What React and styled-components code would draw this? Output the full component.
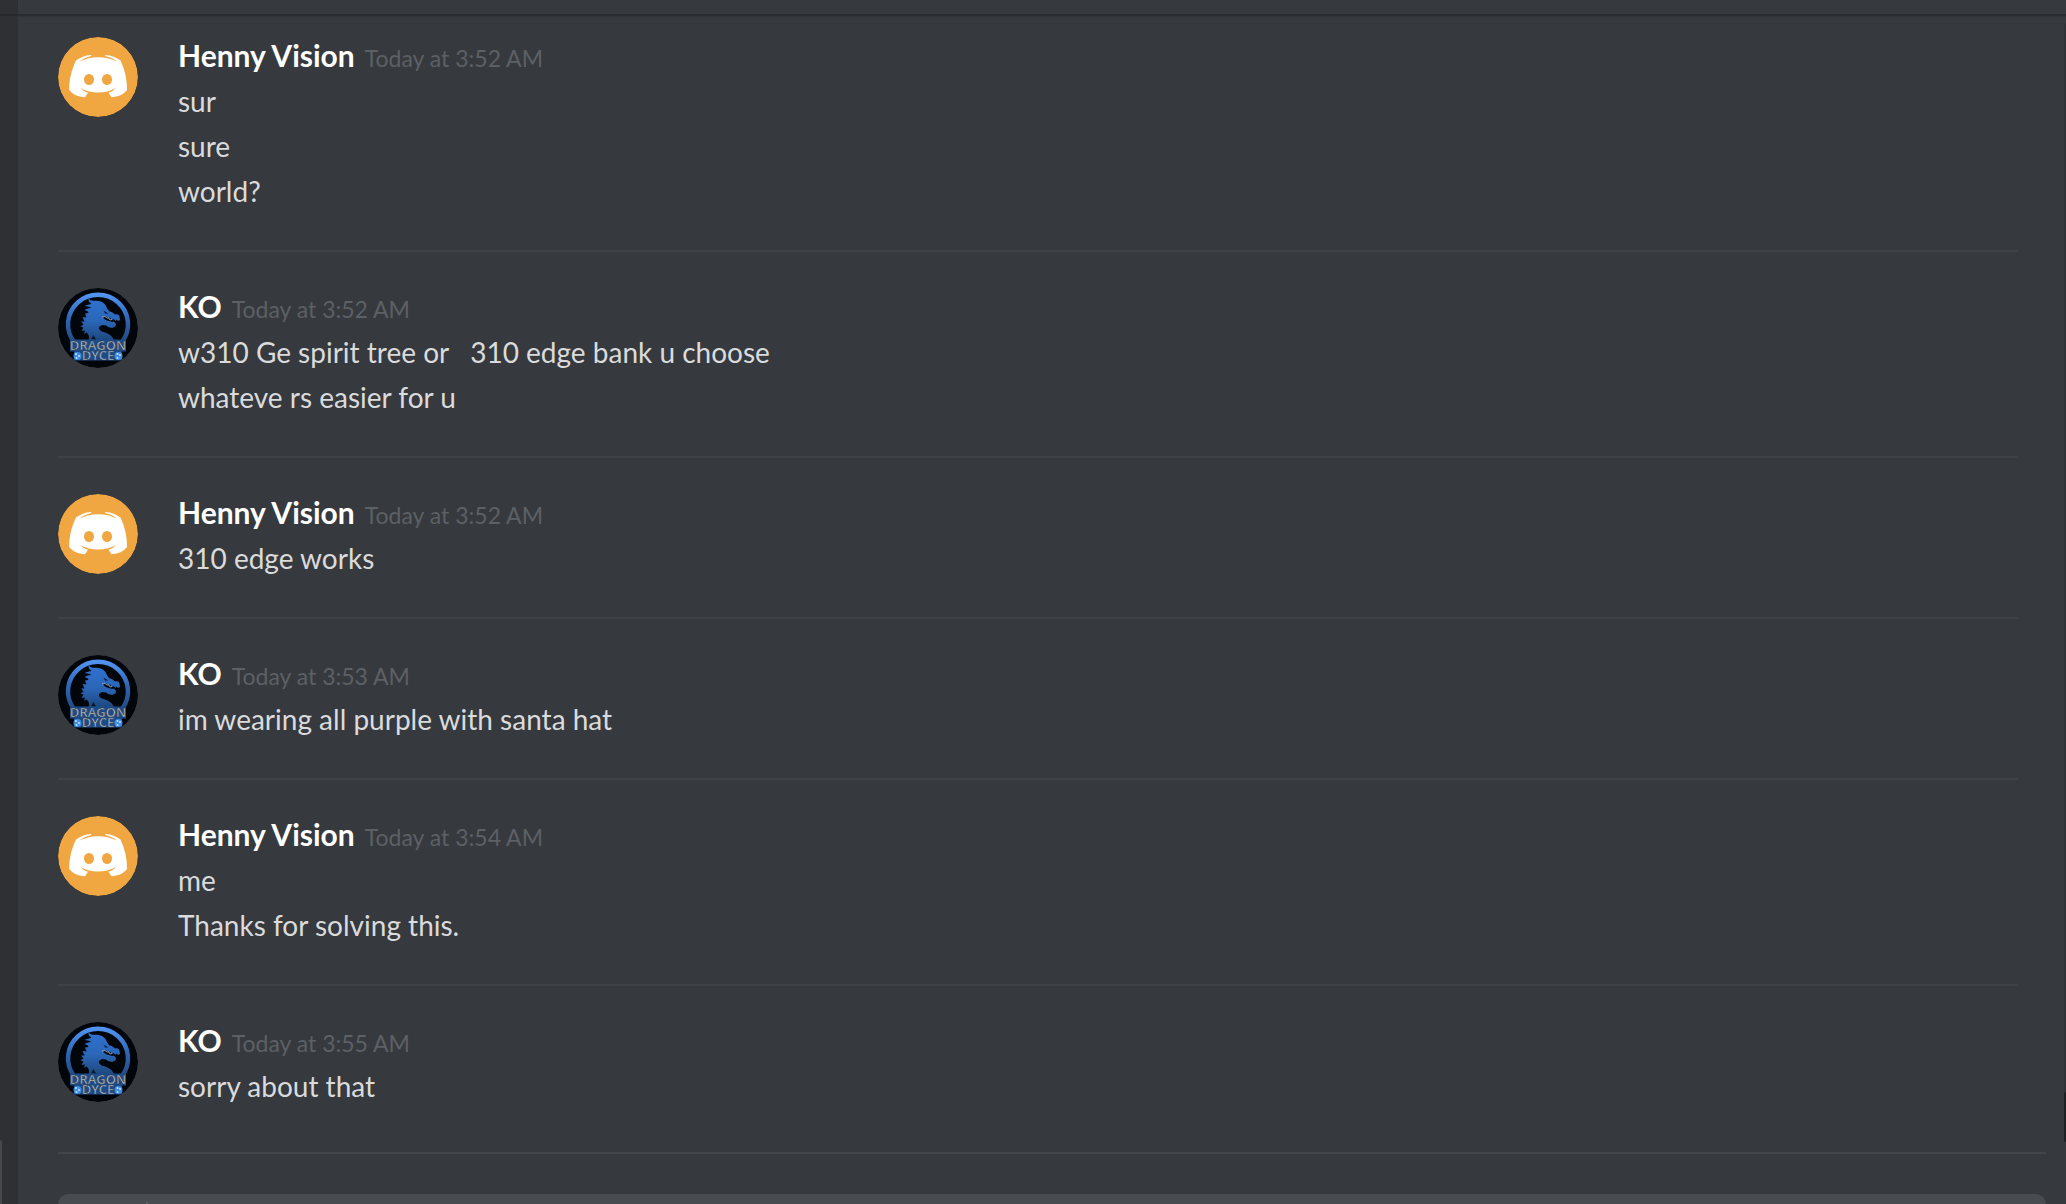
import React from "react";
import styled, { createGlobalStyle } from "styled-components";

const GlobalStyle = createGlobalStyle`
  * {
    box-sizing: border-box;
  }

  body {
    margin: 0;
    background: #36393e;
    font-family: Lato, "Open Sans", sans-serif;
  }
`;

const Layout = styled.div`
  display: flex;
  height: 100vh;
  overflow: hidden;
`;

const Sidebar = styled.aside`
  display: flex;
  flex-direction: column;
  flex: 0 0 18px;
  background: #2f3034;
`;

const SidebarHeader = styled.div`
  flex: 0 0 16px;
  border-bottom: 2px solid #27282b;
`;

const SidebarScroll = styled.div`
  flex: 1;
  display: flex;
  align-items: flex-end;
`;

const SidebarThumb = styled.div`
  width: 2px;
  height: 64px;
  border-radius: 0 2px 0 0;
  background: #46484e;
`;

const Chat = styled.main`
  display: flex;
  flex-direction: column;
  flex: 1;
  min-width: 0;
`;

const ChatHeader = styled.header`
  flex: 0 0 16px;
  border-bottom: 2px solid #2a2c30;
  box-shadow: 0 1px 1px rgba(0, 0, 0, 0.08);
`;

const MessageArea = styled.div`
  flex: 1;
  display: flex;
  min-height: 0;
`;

const MessageList = styled.div`
  flex: 1;
  padding: 21px 46px 0 40px;
`;

const ScrollTrack = styled.div`
  flex: 0 0 2px;
  margin: 8px 0 10px;
  display: flex;
  flex-direction: column;
  justify-content: flex-end;
  background: #303338;
`;

const ScrollThumb = styled.div`
  height: 50px;
  border-radius: 2px 0 0 2px;
  background: #1e2124;
`;

const MessageGroup = styled.article`
  display: flex;
  gap: 40px;
  padding-bottom: 36px;
  margin-bottom: 36px;
  border-bottom: 2px solid #3e4146;

  &:last-child {
    border-bottom: none;
    margin-bottom: 0;
  }
`;

const Avatar = styled.svg`
  flex: 0 0 80px;
  height: 80px;
  border-radius: 50%;
`;

const MessageBody = styled.div`
  min-width: 0;
`;

const MessageHeader = styled.div`
  display: flex;
  align-items: baseline;
  gap: 10px;
  height: 42px;
  line-height: 36px;
`;

const Username = styled.h2`
  margin: 0;
  font-size: 30px;
  font-weight: 700;
  color: #fff;
`;

const Timestamp = styled.time`
  font-size: 23px;
  color: #5d6065;
`;

const MessageText = styled.p`
  margin: 0;
  font-size: 28px;
  line-height: 45px;
  color: #dadbdc;
  white-space: pre-wrap;
`;

const Composer = styled.form`
  flex: 0 0 52px;
  margin: 0 20px 0 40px;
  padding-top: 40px;
  border-top: 2px solid #43464b;
  overflow: hidden;
`;

const ComposerBox = styled.div`
  display: flex;
  height: 88px;
  border-radius: 10px;
  background: #484b50;
`;

const AttachButton = styled.button`
  width: 90px;
  margin-top: 8px;
  border: none;
  border-right: 2px solid #5a5d62;
  background: transparent;
`;

const ComposerInput = styled.input`
  flex: 1;
  border: none;
  outline: none;
  padding: 0 20px;
  background: transparent;
  color: #dadbdc;
  font: inherit;
`;

const LogoText = styled.text`
  font-family: "Open Sans", sans-serif;
  font-size: 13px;
  font-weight: 600;
  fill: #b3bcc5;
  stroke: #27384c;
  stroke-width: 0.4px;
`;

function DiscordAvatar() {
  return (
    <Avatar viewBox="0 0 80 80" aria-hidden="true">
      <circle cx="40" cy="40" r="40" fill="#f0a741" />
      <path
        d="M33 18C27 18.300 22 20.500 18 23.500C13.500 33 11 43 11.200 53C15 57.500 20 60 27 60.200L30 55.800C27 55 24.500 53.300 22.500 51C33 57 47 57 58 51C56 53.300 53.500 55 50.500 55.800L53.500 60.200C60 60 65.500 57.500 69 53C69.200 43 67 33 62.500 23.500C58.500 20.500 53.500 18.300 47.500 18L47 19C52 20.200 56 22 59 24.500C47 18.700 33.500 18.700 21.500 24.500C24.500 22 28.500 20.200 33.500 19Z"
        fill="#fff"
      />
      <ellipse cx="31" cy="42.500" rx="5" ry="5.500" fill="#f0a741" />
      <ellipse cx="49" cy="42.500" rx="5" ry="5.500" fill="#f0a741" />
    </Avatar>
  );
}

function DragonAvatar() {
  return (
    <Avatar viewBox="0 0 80 80" aria-hidden="true">
      <defs>
        <linearGradient id="ring" x1="0" y1="0" x2="0" y2="1">
          <stop offset="0" stopColor="#5093f0" />
          <stop offset="0.5" stopColor="#2f66b4" />
          <stop offset="1" stopColor="#234a80" />
        </linearGradient>
        <linearGradient id="dragon" x1="0" y1="0" x2="0" y2="1">
          <stop offset="0" stopColor="#2f72d2" />
          <stop offset="0.5" stopColor="#2b67b8" />
          <stop offset="1" stopColor="#1b4477" />
        </linearGradient>
      </defs>
      <circle cx="40" cy="40" r="40" fill="#020509" />
      <path
        d="M16 54A30 29.500 0 1 1 64 54"
        fill="none"
        stroke="url(#ring)"
        strokeWidth="4.500"
      />
      <path
        d="M30.500 10C32 13.500 36 12.500 40 13C45 13.600 48 16.500 49 20.500L51.500 23.500C53.500 23.500 55.500 25 57 26.500C59 25.800 61 26.500 61.500 28.500L62 32L60 33L58.500 31.500L57.500 33L55.500 31L54 32L52 29.500L50 30L48.500 28.500L45 28.500C45.500 31 48 32.500 51 33L54 34L56 33.500L58 36L57.500 38.500L54 40L50 39L48 37.500L44 37L41 39C40.500 42 43 43.500 47 44.500C52 46 55.500 49 57 55H29C32 50.500 31.500 47 28.500 44.500L26 46L27 42.500L23.500 43L25.500 39.500L22.500 38.500L25.500 36.500L23 33.500L26.500 33.500L24.500 29L28.500 29.500L27 25.500L30.500 25C30 23 28.500 22.500 26.500 22C29 20.500 31.500 20.500 33.500 19.500C31 18.500 28.500 18.500 26.500 18C29 16.500 31.500 16.500 33.500 16C31.500 14.500 30 12.500 30.500 10Z"
        fill="url(#dragon)"
      />
      <path d="M45.500 22.500L50.500 25.500L47 25.500Z" fill="#0a1d3a" />
      <path
        d="M44 29L47 28.500L49 30L51 30L52 32L54 31.500"
        fill="none"
        stroke="#a8bed6"
        strokeWidth="0.800"
      />
      <path d="M12 51.500H68V63.500H64V72.500H16V63.500H12Z" fill="#1c4b88" />
      <path d="M33 51L35.500 47L38 51.500Z" fill="#0a1a30" />
      <circle cx="19.500" cy="68" r="4" fill="#3f8de0" />
      <circle cx="60.500" cy="68" r="4" fill="#3f8de0" />
      <g fill="#c3e2ff">
        <circle cx="18" cy="66" r="1" />
        <circle cx="21" cy="68" r="1" />
        <circle cx="18.500" cy="70" r="1" />
        <circle cx="59.500" cy="70" r="1" />
        <circle cx="62" cy="67" r="1" />
        <circle cx="59.500" cy="66" r="1" />
      </g>
      <LogoText textAnchor="middle">
        <tspan x="40" y="62">
          DRAGON
        </tspan>
        <tspan x="40" y="72">
          DYCE
        </tspan>
      </LogoText>
    </Avatar>
  );
}

const messages = [
  {
    author: "Henny Vision",
    time: "3:52 AM",
    lines: ["sur", "sure", "world?"],
  },
  {
    author: "KO",
    time: "3:52 AM",
    lines: [
      "w310 Ge spirit tree or   310 edge bank u choose",
      "whateve rs easier for u",
    ],
  },
  { author: "Henny Vision", time: "3:52 AM", lines: ["310 edge works"] },
  {
    author: "KO",
    time: "3:53 AM",
    lines: ["im wearing all purple with santa hat"],
  },
  {
    author: "Henny Vision",
    time: "3:54 AM",
    lines: ["me", "Thanks for solving this."],
  },
  { author: "KO", time: "3:55 AM", lines: ["sorry about that"] },
];

export default function App() {
  return (
    <>
      <GlobalStyle />
      <Layout>
        <Sidebar>
          <SidebarHeader />
          <SidebarScroll>
            <SidebarThumb />
          </SidebarScroll>
        </Sidebar>
        <Chat>
          <ChatHeader />
          <MessageArea>
            <MessageList>
              {messages.map((message, index) => (
                <MessageGroup key={index}>
                  {message.author === "KO" ? (
                    <DragonAvatar />
                  ) : (
                    <DiscordAvatar />
                  )}
                  <MessageBody>
                    <MessageHeader>
                      <Username>{message.author}</Username>
                      <Timestamp>Today at {message.time}</Timestamp>
                    </MessageHeader>
                    {message.lines.map((line) => (
                      <MessageText key={line}>{line}</MessageText>
                    ))}
                  </MessageBody>
                </MessageGroup>
              ))}
            </MessageList>
            <ScrollTrack>
              <ScrollThumb />
            </ScrollTrack>
          </MessageArea>
          <Composer onSubmit={(e) => e.preventDefault()}>
            <ComposerBox>
              <AttachButton type="button" aria-label="Upload a file" />
              <ComposerInput type="text" aria-label="Message" />
            </ComposerBox>
          </Composer>
        </Chat>
      </Layout>
    </>
  );
}
